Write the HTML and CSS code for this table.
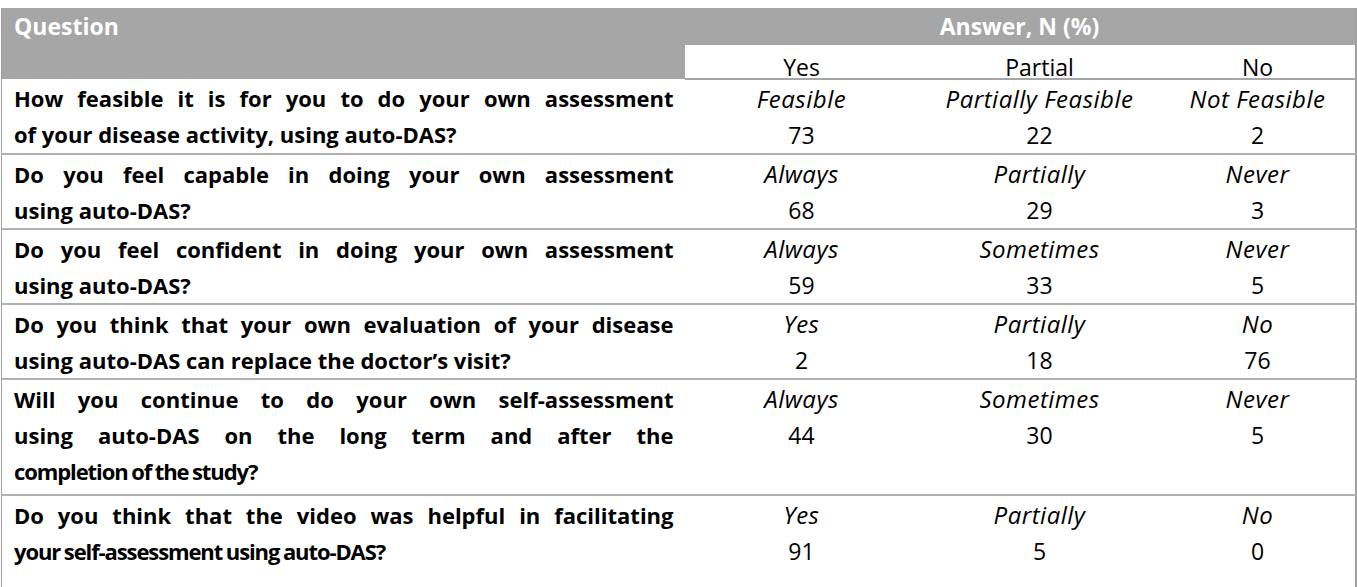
FILE: index.html
```html
<!DOCTYPE html>
<html>
<head>
<meta charset="utf-8">
<link rel="stylesheet" href="styles.css">
</head>
<body>
<div class="page">
<table class="survey">
  <colgroup>
    <col class="c-q"><col class="c-yes"><col class="c-part"><col class="c-no">
  </colgroup>
  <thead>
    <tr class="head-top">
      <th rowspan="2" class="q-head">Question</th>
      <th colspan="3" class="ans-head">Answer, N (%)</th>
    </tr>
    <tr class="head-sub">
      <th>Yes</th><th>Partial</th><th>No</th>
    </tr>
  </thead>
  <tbody>
    <tr class="r2">
      <td class="q"><span class="ln">How feasible it is for you to do your own assessment</span><span class="ln last">of your disease activity, using auto-DAS?</span></td>
      <td class="a"><em>Feasible</em><span>73</span></td>
      <td class="a"><em>Partially Feasible</em><span>22</span></td>
      <td class="a"><em>Not Feasible</em><span>2</span></td>
    </tr>
    <tr class="r2">
      <td class="q"><span class="ln">Do you feel capable in doing your own assessment</span><span class="ln last">using auto-DAS?</span></td>
      <td class="a"><em>Always</em><span>68</span></td>
      <td class="a"><em>Partially</em><span>29</span></td>
      <td class="a"><em>Never</em><span>3</span></td>
    </tr>
    <tr class="r2">
      <td class="q"><span class="ln">Do you feel confident in doing your own assessment</span><span class="ln last">using auto-DAS?</span></td>
      <td class="a"><em>Always</em><span>59</span></td>
      <td class="a"><em>Sometimes</em><span>33</span></td>
      <td class="a"><em>Never</em><span>5</span></td>
    </tr>
    <tr class="r2">
      <td class="q"><span class="ln">Do you think that your own evaluation of your disease</span><span class="ln last">using auto-DAS can replace the doctor’s visit?</span></td>
      <td class="a"><em>Yes</em><span>2</span></td>
      <td class="a"><em>Partially</em><span>18</span></td>
      <td class="a"><em>No</em><span>76</span></td>
    </tr>
    <tr class="r3">
      <td class="q"><span class="ln">Will you continue to do your own self-assessment</span><span class="ln">using auto-DAS on the long term and after the</span><span class="ln last tight">completion of the study?</span></td>
      <td class="a"><em>Always</em><span>44</span></td>
      <td class="a"><em>Sometimes</em><span>30</span></td>
      <td class="a"><em>Never</em><span>5</span></td>
    </tr>
    <tr class="r-last">
      <td class="q"><span class="ln">Do you think that the video was helpful in facilitating</span><span class="ln last tight">your self-assessment using auto-DAS?</span></td>
      <td class="a"><em>Yes</em><span>91</span></td>
      <td class="a"><em>Partially</em><span>5</span></td>
      <td class="a"><em>No</em><span>0</span></td>
    </tr>
  </tbody>
</table>
</div>
</body>
</html>
```

FILE: styles.css
```css
html, body {
  margin: 0;
  padding: 0;
  background: #ffffff;
}

.page {
  padding: 8px 0 0 1px;
}

.survey {
  width: 1354px;
  border-collapse: collapse;
  table-layout: fixed;
  font-family: "Open Sans", "Liberation Sans", sans-serif;
  font-size: 23px;
  color: #000;
  border-left: 1px solid #a0a0a0;
  border-right: 2px solid #a0a0a0;
  border-bottom: 2px solid #a0a0a0;
}

.c-q { width: 683px; }
.c-yes { width: 234px; }
.c-part { width: 242px; }
.c-no { width: 195px; }

.survey th,
.survey td {
  padding: 0;
  vertical-align: top;
}

.head-top {
  height: 37px;
}

.head-top th {
  background: #a6a6a6;
  color: #fff;
  font-weight: 700;
  font-size: 23px;
  line-height: 36px;
}

.q-head {
  text-align: left;
  padding-left: 12px !important;
}

.ans-head {
  text-align: center;
}

.head-sub {
  height: 34px;
}

.head-sub th {
  background: #fff;
  font-weight: 400;
  line-height: 22px;
  vertical-align: bottom;
  text-align: center;
  border-bottom: 2px solid #a6a6a6;
}

.survey tbody tr {
  border-top: 2px solid #b0b0b0;
}

.survey thead + tbody tr:first-child {
  border-top: none;
}

.r2 td { height: 72px; }
.r3 td { height: 113px; }
.r-last td { height: 93px; }

.q {
  font-weight: 700;
  font-size: 22px;
  line-height: 36px;
  padding: 1px 11px 0 12px !important;
}

.ln {
  display: block;
  text-align: justify;
  text-align-last: justify;
}

.ln.last {
  text-align-last: left;
}

.ln.tight {
  letter-spacing: -1.1px;
  word-spacing: -1px;
}

.a {
  text-align: center;
  line-height: 36px;
  padding-top: 1px !important;
}

.a em,
.a span {
  display: block;
}

.a em {
  font-style: italic;
  font-size: 24px;
  letter-spacing: 0.5px;
}
```
